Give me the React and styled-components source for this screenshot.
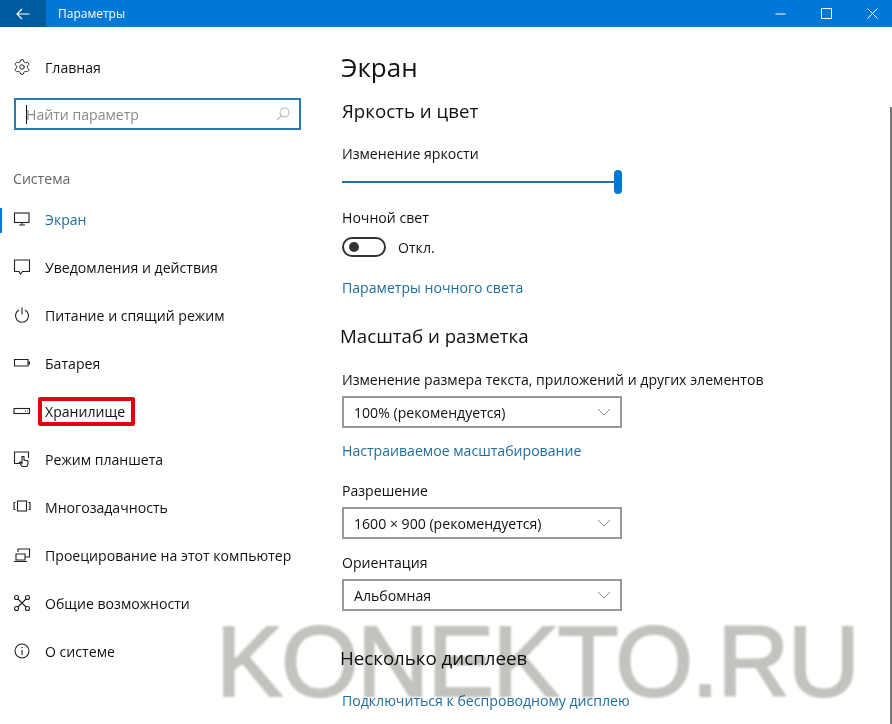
import React from 'react'
import styled, { createGlobalStyle } from 'styled-components'
import { Settings } from 'lucide-react'

const Global = createGlobalStyle`
    html, body { margin: 0; padding: 0; background: #fff; }
    body { font-family: "Open Sans", "Liberation Sans", sans-serif; }
`

const Ic = ({ children }) => (
    <svg width="18" height="18" viewBox="0 0 18 18" fill="none" stroke="#222" strokeWidth="1.1">{children}</svg>
)

const icons = {
    screen: <Ic><rect x="1.500" y="3" width="14.500" height="9.500" /><path d="M9 12.500v2.500M6 15h6" /></Ic>,
    bell: <Ic><path d="M1.500 2h15v11.500H9.500L7.500 16 6 13.500H1.500z" /></Ic>,
    power: <Ic><path d="M6 4a6.500 6.500 0 1 0 6 0M9 1.500v7" /></Ic>,
    battery: <Ic><path d="M1.500 5.500h13.500v6.500H1.500zM15 8h1.500v2H15" /></Ic>,
    storage: <Ic><rect x="1" y="6.500" width="15.500" height="5" /><path d="M12 9h1M14 9h1" /></Ic>,
    tablet: <Ic><path d="M7 13.500H1.500V2h14v6" /><path d="M9 16.500l-2.500-4 1-.5 1.500 1.500V6.500h2V10l4 1v3l-1 2.500z" fill="#fff" /></Ic>,
    multi: <Ic><rect x="4.500" y="3" width="9" height="10" /><path d="M2.500 4.500H1v7h1.500M15.500 4.500H17v7h-1.500" /></Ic>,
    project: <Ic><path d="M5 6V3h11.500v8H12" /><path d="M3 8h9v6H3zM1 15.500h13" fill="#fff" /></Ic>,
    access: <Ic><circle cx="3.500" cy="3.500" r="2" /><circle cx="14.500" cy="3.500" r="2" /><circle cx="3.500" cy="14.500" r="2" /><circle cx="14.500" cy="14.500" r="2" /><path d="M5 5l8 8M13 5l-8 8" /></Ic>,
    info: <Ic><circle cx="9" cy="9" r="7" /><path d="M9 8v5M9 5v1.300" /></Ic>,
}

const navItems = [
    { key: 'screen', label: 'Экран', active: true },
    { key: 'bell', label: 'Уведомления и действия' },
    { key: 'power', label: 'Питание и спящий режим' },
    { key: 'battery', label: 'Батарея' },
    { key: 'storage', label: 'Хранилище', marked: true },
    { key: 'tablet', label: 'Режим планшета' },
    { key: 'multi', label: 'Многозадачность' },
    { key: 'project', label: 'Проецирование на этот компьютер' },
    { key: 'access', label: 'Общие возможности' },
    { key: 'info', label: 'О системе' },
]

const Chevron = () => (
    <svg width="14" height="8" viewBox="0 0 14 8" fill="none" stroke="#8c8c8c" strokeWidth="1"><path d="M1 1l6 6 6-6" /></svg>
)

const App = () => (
    <Win>
        <Global />
        <TitleBar>
            <BackBtn>
                <svg width="14" height="12" viewBox="0 0 14 12" fill="none" stroke="#fff" strokeWidth="1.2"><path d="M13.500 6H1M6 1L1 6l5 5" /></svg>
            </BackBtn>
            <WinTitle>Параметры</WinTitle>
            <WinBtns>
                <svg width="11" height="11" viewBox="0 0 11 11" stroke="#fff" fill="none"><path d="M0.500 6h10" /></svg>
                <svg width="11" height="11" viewBox="0 0 11 11" stroke="#fff" fill="none"><rect x="0.500" y="0.500" width="10" height="10" /></svg>
                <svg width="11" height="11" viewBox="0 0 11 11" stroke="#fff" fill="none"><path d="M0.500 0.500l10 10M10.500 0.500l-10 10" /></svg>
            </WinBtns>
        </TitleBar>
        <Body>
            <Sidebar>
                <HomeRow>
                    <Settings size={18} color="#222" strokeWidth={1.3} />
                    <HomeLabel>Главная</HomeLabel>
                </HomeRow>
                <SearchBox>
                    <Caret />
                    <Placeholder>Найти параметр</Placeholder>
                    <svg width="14" height="14" viewBox="0 0 14 14" fill="none" stroke="#b5b5b5" strokeWidth="1.1"><circle cx="8.500" cy="5.500" r="4.500" /><path d="M5.200 8.800L1 13" /></svg>
                </SearchBox>
                <GroupLabel>Система</GroupLabel>
                <Nav>
                    {navItems.map(item => (
                        <NavRow key={item.key} $active={item.active}>
                            {item.active && <ActiveMark />}
                            {icons[item.key]}
                            <NavLabel $active={item.active} $marked={item.marked}>{item.label}</NavLabel>
                        </NavRow>
                    ))}
                </Nav>
            </Sidebar>
            <Main>
                <PageTitle>Экран</PageTitle>
                <SectionTitle>Яркость и цвет</SectionTitle>
                <BrightLabel>Изменение яркости</BrightLabel>
                <Slider><SliderThumb /></Slider>
                <NightLabel>Ночной свет</NightLabel>
                <ToggleRow>
                    <Toggle><ToggleDot /></Toggle>
                    <ToggleText>Откл.</ToggleText>
                </ToggleRow>
                <LinkText>Параметры ночного света</LinkText>
                <ScaleTitle>Масштаб и разметка</ScaleTitle>
                <FieldLabel>Изменение размера текста, приложений и других элементов</FieldLabel>
                <Select><span>100% (рекомендуется)</span><Chevron /></Select>
                <ScaleLink>Настраиваемое масштабирование</ScaleLink>
                <FieldLabel>Разрешение</FieldLabel>
                <Select><span>1600 × 900 (рекомендуется)</span><Chevron /></Select>
                <OrientLabel>Ориентация</OrientLabel>
                <Select><span>Альбомная</span><Chevron /></Select>
                <DisplaysTitle>Несколько дисплеев</DisplaysTitle>
                <WirelessLink>Подключиться к беспроводному дисплею</WirelessLink>
            </Main>
        </Body>
        <ScrollLine />
        <Watermark>KONEKTO.RU</Watermark>
    </Win>
)

const Win = styled.div`
    position: relative;
    width: 892px;
    height: 724px;
    overflow: hidden;
    background: #fff;
    color: #111;
    font-size: 14.1px;
`
const TitleBar = styled.div`
    display: flex;
    align-items: center;
    height: 27px;
    background: #0078d7;
    color: #fff;
`
const BackBtn = styled.div`
    display: flex;
    align-items: center;
    justify-content: center;
    width: 46px;
    height: 100%;
    background: #005a9e;
`
const WinTitle = styled.div`
    margin-left: 12px;
    font-size: 12px;
`
const WinBtns = styled.div`
    display: flex;
    gap: 35px;
    margin-left: auto;
    padding-right: 14px;
`
const Body = styled.div`
    display: flex;
`
const Sidebar = styled.div`
    width: 342px;
    flex-shrink: 0;
    padding-top: 28px;
    box-sizing: border-box;
`
const HomeRow = styled.div`
    display: flex;
    align-items: center;
    height: 24px;
    padding-left: 13px;
`
const HomeLabel = styled.div`
    margin-left: 14px;
`
const SearchBox = styled.div`
    display: flex;
    align-items: center;
    box-sizing: border-box;
    width: 287px;
    height: 32px;
    margin: 19px 0 0 14px;
    padding: 0 9px 0 10px;
    border: 2px solid #2a7ab0;
`
const Caret = styled.div`
    width: 1px;
    height: 19px;
    background: #111;
`
const Placeholder = styled.div`
    flex: 1;
    margin-left: -1px;
    color: #8a8a8a;
`
const GroupLabel = styled.div`
    margin: 39px 0 0 13px;
    color: #666;
    line-height: 20px;
`
const Nav = styled.div`
    display: flex;
    flex-direction: column;
    margin-top: 6px;
`
const NavRow = styled.div`
    position: relative;
    display: flex;
    align-items: center;
    height: 48px;
    padding-left: 13px;
    color: ${p => (p.$active ? '#1f6d9e' : '#111')};
`
const ActiveMark = styled.div`
    position: absolute;
    left: 0;
    top: 13px;
    width: 2px;
    height: 25px;
    background: #0078d7;
`
const NavLabel = styled.div`
    position: relative;
    margin-left: 14px;
    &::after {
        content: '';
        display: ${p => (p.$marked ? 'block' : 'none')};
        position: absolute;
        inset: -5px -10px -5px -7px;
        border: 4px solid #e0000f;
        border-radius: 2px;
    }
`
const Main = styled.div`
    flex: 1;
    display: flex;
    flex-direction: column;
    align-items: flex-start;
    padding-top: 22px;
`
const PageTitle = styled.div`
    font-size: 26px;
    line-height: 36px;
    margin-left: -1px;
`
const SectionTitle = styled.div`
    font-size: 18.7px;
    line-height: 26px;
    margin-top: 13px;
`
const ScaleTitle = styled(SectionTitle)`
    margin-top: 25px;
    margin-bottom: 8px;
    margin-left: -2px;
`
const DisplaysTitle = styled(ScaleTitle)`
    margin-top: 34px;
    margin-bottom: 0;
`
const FieldLabel = styled.div`
    line-height: 20px;
    margin-top: 13px;
`
const BrightLabel = styled(FieldLabel)`
    margin-top: 20px;
`
const NightLabel = styled(FieldLabel)`
    margin-top: 12px;
`
const OrientLabel = styled(FieldLabel)`
    margin-top: 14px;
`
const Slider = styled.div`
    position: relative;
    width: 276px;
    height: 2px;
    margin-top: 17px;
    margin-bottom: 13px;
    background: #1f6fa8;
`
const SliderThumb = styled.div`
    position: absolute;
    right: -4px;
    top: -11px;
    width: 8px;
    height: 24px;
    border-radius: 4px;
    background: #0078d7;
`
const ToggleRow = styled.div`
    display: flex;
    align-items: center;
    margin-top: 9px;
`
const Toggle = styled.div`
    box-sizing: border-box;
    display: flex;
    align-items: center;
    width: 44px;
    height: 20px;
    padding-left: 5px;
    border: 2px solid #333;
    border-radius: 10px;
`
const ToggleDot = styled.div`
    width: 10px;
    height: 10px;
    border-radius: 50%;
    background: #333;
`
const ToggleText = styled.div`
    margin-left: 12px;
`
const LinkText = styled.div`
    color: #1f6d9e;
    line-height: 20px;
    margin-top: 21px;
`
const ScaleLink = styled(LinkText)`
    margin-top: 13px;
    margin-bottom: 7px;
`
const WirelessLink = styled(LinkText)`
    margin-top: 20px;
`
const Select = styled.div`
    display: flex;
    align-items: center;
    justify-content: space-between;
    box-sizing: border-box;
    width: 280px;
    height: 32px;
    margin-top: 6px;
    padding: 0 9px 0 10px;
    border: 2px solid #999;
`
const ScrollLine = styled.div`
    position: absolute;
    right: 0;
    top: 107px;
    bottom: 0;
    width: 2px;
    background: #777;
`
const Watermark = styled.div`
    position: absolute;
    left: 216px;
    top: 604px;
    font-family: "Liberation Sans", sans-serif;
    font-size: 100px;
    line-height: 115px;
    letter-spacing: -1.7px;
    color: #c2c2be;
    -webkit-text-stroke: 2px #c2c2be;
    mix-blend-mode: multiply;
    filter: blur(0.8px);
    white-space: nowrap;
    pointer-events: none;
`

export default App
